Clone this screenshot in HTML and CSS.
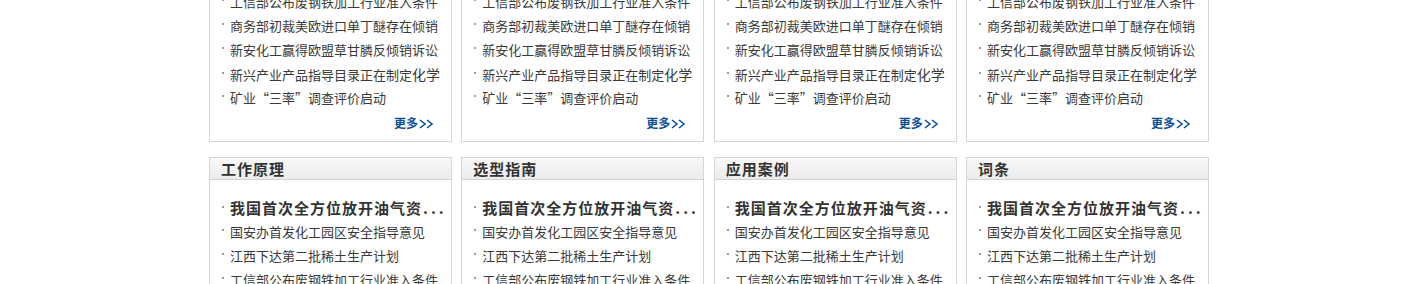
FILE: index.html
```html
<!DOCTYPE html>
<html lang="zh-CN">
<head>
    <meta charset="UTF-8">
    <title>资讯栏目</title>
    <link rel="stylesheet" href="styles.css">
</head>
<body>
    <div class="wrap">
        <!-- top row -->
        <div class="box">
            <div class="box-head">行业新闻</div>
            <ul class="news">
                <li class="hot">我国首次全方位放开油气资<span class="dots">...</span></li>
                <li>国安办首发化工园区安全指导意见</li>
                <li>江西下达第二批稀土生产计划</li>
                <li>工信部公布废钢铁加工行业准入条件</li>
                <li>商务部初裁美欧进口单丁醚存在倾销</li>
                <li>新安化工赢得欧盟草甘膦反倾销诉讼</li>
                <li>新兴产业产品指导目录正在制定<span class="big">化学</span></li>
                <li>矿业“三率”调查评价启动</li>
            </ul>
            <div class="more"><a href="#">更多<svg width="16" height="10" viewBox="0 0 16 10"><path d="M1 1l5 4-5 4M8 1l5 4-5 4" /></svg></a></div>
        </div>
        <div class="box">
            <div class="box-head">企业动态</div>
            <ul class="news">
                <li class="hot">我国首次全方位放开油气资<span class="dots">...</span></li>
                <li>国安办首发化工园区安全指导意见</li>
                <li>江西下达第二批稀土生产计划</li>
                <li>工信部公布废钢铁加工行业准入条件</li>
                <li>商务部初裁美欧进口单丁醚存在倾销</li>
                <li>新安化工赢得欧盟草甘膦反倾销诉讼</li>
                <li>新兴产业产品指导目录正在制定<span class="big">化学</span></li>
                <li>矿业“三率”调查评价启动</li>
            </ul>
            <div class="more"><a href="#">更多<svg width="16" height="10" viewBox="0 0 16 10"><path d="M1 1l5 4-5 4M8 1l5 4-5 4" /></svg></a></div>
        </div>
        <div class="box">
            <div class="box-head">技术文章</div>
            <ul class="news">
                <li class="hot">我国首次全方位放开油气资<span class="dots">...</span></li>
                <li>国安办首发化工园区安全指导意见</li>
                <li>江西下达第二批稀土生产计划</li>
                <li>工信部公布废钢铁加工行业准入条件</li>
                <li>商务部初裁美欧进口单丁醚存在倾销</li>
                <li>新安化工赢得欧盟草甘膦反倾销诉讼</li>
                <li>新兴产业产品指导目录正在制定<span class="big">化学</span></li>
                <li>矿业“三率”调查评价启动</li>
            </ul>
            <div class="more"><a href="#">更多<svg width="16" height="10" viewBox="0 0 16 10"><path d="M1 1l5 4-5 4M8 1l5 4-5 4" /></svg></a></div>
        </div>
        <div class="box">
            <div class="box-head">展会信息</div>
            <ul class="news">
                <li class="hot">我国首次全方位放开油气资<span class="dots">...</span></li>
                <li>国安办首发化工园区安全指导意见</li>
                <li>江西下达第二批稀土生产计划</li>
                <li>工信部公布废钢铁加工行业准入条件</li>
                <li>商务部初裁美欧进口单丁醚存在倾销</li>
                <li>新安化工赢得欧盟草甘膦反倾销诉讼</li>
                <li>新兴产业产品指导目录正在制定<span class="big">化学</span></li>
                <li>矿业“三率”调查评价启动</li>
            </ul>
            <div class="more"><a href="#">更多<svg width="16" height="10" viewBox="0 0 16 10"><path d="M1 1l5 4-5 4M8 1l5 4-5 4" /></svg></a></div>
        </div>

        <!-- bottom row -->
        <div class="box">
            <div class="box-head">工作原理</div>
            <ul class="news">
                <li class="hot">我国首次全方位放开油气资<span class="dots">...</span></li>
                <li>国安办首发化工园区安全指导意见</li>
                <li>江西下达第二批稀土生产计划</li>
                <li>工信部公布废钢铁加工行业准入条件</li>
                <li>商务部初裁美欧进口单丁醚存在倾销</li>
                <li>新安化工赢得欧盟草甘膦反倾销诉讼</li>
                <li>新兴产业产品指导目录正在制定<span class="big">化学</span></li>
                <li>矿业“三率”调查评价启动</li>
            </ul>
            <div class="more"><a href="#">更多<svg width="16" height="10" viewBox="0 0 16 10"><path d="M1 1l5 4-5 4M8 1l5 4-5 4" /></svg></a></div>
        </div>
        <div class="box">
            <div class="box-head">选型指南</div>
            <ul class="news">
                <li class="hot">我国首次全方位放开油气资<span class="dots">...</span></li>
                <li>国安办首发化工园区安全指导意见</li>
                <li>江西下达第二批稀土生产计划</li>
                <li>工信部公布废钢铁加工行业准入条件</li>
                <li>商务部初裁美欧进口单丁醚存在倾销</li>
                <li>新安化工赢得欧盟草甘膦反倾销诉讼</li>
                <li>新兴产业产品指导目录正在制定<span class="big">化学</span></li>
                <li>矿业“三率”调查评价启动</li>
            </ul>
            <div class="more"><a href="#">更多<svg width="16" height="10" viewBox="0 0 16 10"><path d="M1 1l5 4-5 4M8 1l5 4-5 4" /></svg></a></div>
        </div>
        <div class="box">
            <div class="box-head">应用案例</div>
            <ul class="news">
                <li class="hot">我国首次全方位放开油气资<span class="dots">...</span></li>
                <li>国安办首发化工园区安全指导意见</li>
                <li>江西下达第二批稀土生产计划</li>
                <li>工信部公布废钢铁加工行业准入条件</li>
                <li>商务部初裁美欧进口单丁醚存在倾销</li>
                <li>新安化工赢得欧盟草甘膦反倾销诉讼</li>
                <li>新兴产业产品指导目录正在制定<span class="big">化学</span></li>
                <li>矿业“三率”调查评价启动</li>
            </ul>
            <div class="more"><a href="#">更多<svg width="16" height="10" viewBox="0 0 16 10"><path d="M1 1l5 4-5 4M8 1l5 4-5 4" /></svg></a></div>
        </div>
        <div class="box">
            <div class="box-head">词条</div>
            <ul class="news">
                <li class="hot">我国首次全方位放开油气资<span class="dots">...</span></li>
                <li>国安办首发化工园区安全指导意见</li>
                <li>江西下达第二批稀土生产计划</li>
                <li>工信部公布废钢铁加工行业准入条件</li>
                <li>商务部初裁美欧进口单丁醚存在倾销</li>
                <li>新安化工赢得欧盟草甘膦反倾销诉讼</li>
                <li>新兴产业产品指导目录正在制定<span class="big">化学</span></li>
                <li>矿业“三率”调查评价启动</li>
            </ul>
            <div class="more"><a href="#">更多<svg width="16" height="10" viewBox="0 0 16 10"><path d="M1 1l5 4-5 4M8 1l5 4-5 4" /></svg></a></div>
        </div>
    </div>
</body>
</html>
```

FILE: styles.css
```css
body {
    margin: 0;
    padding-right: 1px;
    background: #fff;
    color: #333;
    font-family: "Noto Sans CJK SC", "Noto Sans", sans-serif;
}
/* the page is scrolled: first row header sits above the window */
.wrap {
    width: 1000px;
    margin: -121px auto 0;
    display: grid;
    grid-template-columns: repeat(4, 243px);
    justify-content: space-between;
    row-gap: 15px;
}
.box {
    border: 1px solid #d6d6d6;
    padding-bottom: 7px;
}
.box-head {
    height: 21px;
    line-height: 21px;
    padding-left: 11px;
    background: linear-gradient(#f8f8f8, #ececec);
    border-bottom: 1px solid #d2d2d2;
    font-size: 15px;
    font-weight: bold;
    letter-spacing: 1px;
    color: #333;
}
.news {
    list-style: none;
    margin: 0;
    padding: 16px 0 0 12px;
}
.news li {
    height: 24px;
    line-height: 24px;
    font-size: 13px;
    color: #3a3a3a;
    white-space: nowrap;
    overflow: hidden;
}
.news li::before {
    content: "";
    display: inline-block;
    width: 2px;
    height: 2px;
    margin-right: 6px;
    background: #9a9a9a;
    vertical-align: 6px;
}
.news li.hot {
    font-size: 15px;
    font-weight: bold;
    letter-spacing: 1px;
    color: #333;
}
.news .dots {
    letter-spacing: 3px;
    margin-left: 1px;
}
.news .big {
    font-size: 14px;
}
.more {
    height: 24px;
    line-height: 22px;
    text-align: right;
    padding-right: 16px;
}
.more a {
    color: #0e4f9a;
    font-size: 12px;
    font-weight: bold;
    text-decoration: none;
}
.more svg {
    margin-left: 1px;
    vertical-align: -1px;
}
.more svg path {
    fill: none;
    stroke: #0e4f9a;
    stroke-width: 1.6;
}
```
